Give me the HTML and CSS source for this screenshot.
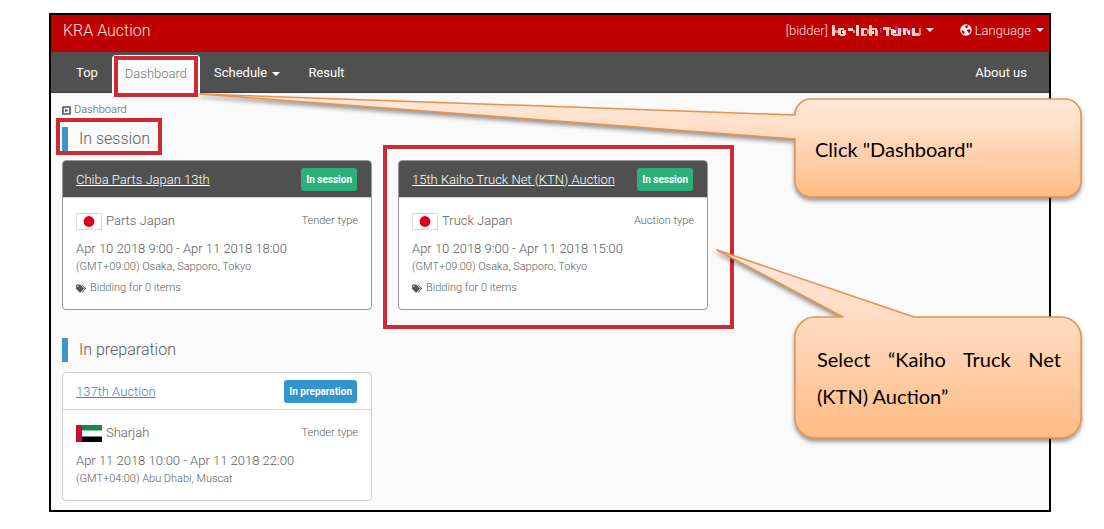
FILE: index.html
```html
<!DOCTYPE html>
<html lang="en">
<head>
<meta charset="utf-8">
<title>KRA Auction - Dashboard</title>
<link rel="stylesheet" href="styles.css">
</head>
<body>
<svg class="defs" aria-hidden="true">
  <symbol id="tags" viewBox="0 0 640 512"><path d="M497.941 225.941L286.059 14.059A48 48 0 0 0 252.118 0H48C21.49 0 0 21.49 0 48v204.118a48 48 0 0 0 14.059 33.941l211.882 211.882c18.744 18.745 49.136 18.746 67.882 0l204.118-204.118c18.745-18.745 18.745-49.137 0-67.882zM112 160c-26.51 0-48-21.49-48-48s21.49-48 48-48 48 21.49 48 48-21.49 48-48 48zm513.941 133.823L421.823 497.941c-18.745 18.745-49.137 18.745-67.882 0l-.36-.36L527.64 323.522c16.999-16.999 26.36-39.6 26.36-63.64s-9.362-46.641-26.36-63.64L331.397 0h48.721a48 48 0 0 1 33.941 14.059l211.882 211.882c18.745 18.745 18.745 49.137 0 67.882z"/></symbol>
  <symbol id="japan" viewBox="0 0 26 17"><path fill="#fff" stroke="#d5dadd" d="M.5.5h25v16H.5z"/><circle cx="13" cy="8.5" r="5.4" fill="#e0001b"/></symbol>
  <symbol id="uae" viewBox="0 0 26 17"><path fill="#fff" d="M0 0h26v17H0z"/><path fill="#158a4b" d="M5 0h21v5.5H5z"/><path fill="#000" d="M5 11.500h21V17H5z"/><path fill="#d3082f" d="M0 0h6v17H0z"/></symbol>
</svg>
<div class="frame">
  <header class="topbar">
    <a class="brand" href="#">KRA Auction</a>
    <button class="menu" type="button" aria-label="Bidder account">[bidder]
      <svg class="mosaic" viewBox="0 0 90 13" aria-hidden="true">
        <g fill="#f6cfc4"><path d="M1 1h3v11H1zM7 4h6v2H7zM7 5h3v6H7zM12 6h3v5h-3zM9 10h5v2H9zM17 4h5v3h-5zM25 3h3v9h-3zM30 4h6v2h-6zM30 6h3v5h-3zM30 10h6v2h-6zM38 1h3v11h-3zM41 4h5v2h-5zM44 6h3v6h-3zM55 3h3v9h-3zM52 3h4v3h-4zM60 5h3v6h-3zM62 10h5v2h-5zM67 4h3v8h-3zM72 4h3v7h-3zM76 6h4v3h-4zM81 4h3v8h-3zM84 9h5v3h-5z"/></g>
        <g fill="#f08a4a"><path d="M4 6h3v3H4zM22 6h2v3h-2zM36 5h2v5h-2zM58 3h2v3h-2zM75 4h2v3h-2zM88 4h2v7h-2z"/></g>
        <g fill="#c51d8d"><path d="M49 4h2v5h-2zM64 2h3v8h-3zM70 4h2v4h-2zM79 5h2v5h-2z"/></g>
        <g fill="#fff"><path d="M11 7h2v2h-2zM25 1h3v2h-3zM41 7h2v3h-2zM63 6h2v3h-2zM77 7h2v4h-2z"/></g>
      </svg>
      <span class="caret"></span></button>
    <button class="menu" type="button">
      <svg class="globe" viewBox="0 0 12 12" aria-hidden="true"><circle cx="6" cy="6" r="5.700" fill="#fff"/><path fill="#be0000" d="M5.500 1.600l2.200-.3 1 .9-1.400.9.300 1-1.500.2-1-1.200zM1.400 6l1.500.5 1.800 1.300-.4 1.300-.5 1.300-1.400-1.400zM7 5.700l2.400-.4 1.300 1.300-.6 1.600-1.300 1.300-.8-1.700-1.200-.7z"/></svg>Language
      <span class="caret"></span></button>
  </header>
  <nav class="nav">
    <a href="#">Top</a>
    <a class="active" href="#" aria-current="page">Dashboard<span class="mark mark-tab"></span></a>
    <button type="button">Schedule <span class="caret"></span></button>
    <a href="#">Result</a>
    <a class="last" href="#">About us</a>
  </nav>
  <main class="content">
    <div class="crumb">
      <svg viewBox="0 0 9 9" aria-hidden="true"><path fill="none" stroke="#4d5559" stroke-width="1.600" d="M1 1h7v7H1z"/><path fill="#4d5559" d="M3.200 2.500v4l3-2z"/></svg>Dashboard
    </div>
    <section>
      <h2>In session<span class="mark mark-title"></span></h2>
      <div class="cards">
        <article class="card live">
          <div class="card-head"><a href="#">Chiba Parts Japan 13th</a><span class="badge">In session</span></div>
          <div class="card-body">
            <div class="place"><svg class="flag" aria-hidden="true"><use href="#japan"/></svg><span>Parts Japan</span><small>Tender type</small></div>
            <p class="time">Apr 10 2018 9:00 - Apr 11 2018 18:00</p>
            <p class="zone">(GMT+09:00) Osaka, Sapporo, Tokyo</p>
            <p class="bids"><svg class="tags" aria-hidden="true"><use href="#tags"/></svg>Bidding for 0 items</p>
          </div>
        </article>
        <article class="card live">
          <div class="card-head"><a href="#">15th Kaiho Truck Net (KTN) Auction</a><span class="badge">In session</span></div>
          <div class="card-body">
            <div class="place"><svg class="flag" aria-hidden="true"><use href="#japan"/></svg><span>Truck Japan</span><small>Auction type</small></div>
            <p class="time">Apr 10 2018 9:00 - Apr 11 2018 15:00</p>
            <p class="zone">(GMT+09:00) Osaka, Sapporo, Tokyo</p>
            <p class="bids"><svg class="tags" aria-hidden="true"><use href="#tags"/></svg>Bidding for 0 items</p>
          </div>
          <span class="mark mark-card"></span>
        </article>
      </div>
    </section>
    <section>
      <h2>In preparation</h2>
      <div class="cards">
        <article class="card">
          <div class="card-head"><a href="#">137th Auction</a><span class="badge">In preparation</span></div>
          <div class="card-body">
            <div class="place"><svg class="flag" aria-hidden="true"><use href="#uae"/></svg><span>Sharjah</span><small>Tender type</small></div>
            <p class="time">Apr 11 2018 10:00 - Apr 11 2018 22:00</p>
            <p class="zone">(GMT+04:00) Abu Dhabi, Muscat</p>
          </div>
        </article>
      </div>
    </section>
  </main>
  <aside class="callout callout-one">
    <svg class="bubble" viewBox="0 0 884 106" aria-hidden="true">
      <defs><linearGradient id="g1" x1="0" y1="0" x2="0" y2="1"><stop offset="0" stop-color="#ffe9da"/><stop offset=".3" stop-color="#ffdfc9"/><stop offset="1" stop-color="#ffbc84"/></linearGradient></defs>
      <path fill="url(#g1)" stroke="#e8924e" stroke-width="1.500" stroke-linejoin="round" d="M596 22A16 16 0 0 1 612 6H866A16 16 0 0 1 882 22V88A16 16 0 0 1 866 104H612A16 16 0 0 1 596 88V46L1 1 596 22z"/>
    </svg>
    <p>Click "Dashboard"</p>
  </aside>
  <aside class="callout callout-two">
    <svg class="bubble" viewBox="0 0 367 191" aria-hidden="true">
      <defs><linearGradient id="g2" x1="0" y1="0" x2="0" y2="1"><stop offset="0" stop-color="#ffe9da"/><stop offset=".35" stop-color="#ffdcc3"/><stop offset="1" stop-color="#ffbc84"/></linearGradient></defs>
      <path fill="url(#g2)" stroke="#e8924e" stroke-width="1.500" stroke-linejoin="round" d="M99 68H127L1 1 198 68H345A20 20 0 0 1 365 88V169A20 20 0 0 1 345 189H99A20 20 0 0 1 79 169V88A20 20 0 0 1 99 68z"/>
    </svg>
    <p>Select “Kaiho Truck Net (KTN) Auction”</p>
  </aside>
</div>
</body>
</html>
```
FILE: styles.css
```css
* { box-sizing: border-box; }
body { margin: 0; background: #fff; color: #5c5c5c; font-family: Roboto, "Liberation Sans", sans-serif; font-size: 13px; font-weight: 300; }
a { color: inherit; }
button { border: 0; background: none; color: inherit; font: inherit; cursor: pointer; }
h2, p { margin: 0; }
.defs { position: absolute; width: 0; height: 0; }

.frame { position: relative; margin: 13px 53px 17px 49px; border: 2px solid #000; background: #fafafa; }

.topbar { display: flex; align-items: center; gap: 26px; padding: 0 5px 6px 12px; height: 37px; background: #be0000; border-bottom: 1px solid #8a1414; color: #fbe4e4; font-size: 13px; }
.brand { margin-right: auto; font-size: 16px; text-decoration: none; }
.menu { display: flex; align-items: center; gap: 3px; padding: 0; }
.mosaic { width: 90px; height: 13px; }
.globe { width: 12px; height: 12px; }
.caret { display: inline-block; vertical-align: middle; margin-left: 2px; border: 4px solid transparent; border-top-color: currentColor; border-bottom: 0; }

.nav { display: flex; align-items: flex-end; height: 41px; padding: 0 8px 0 11px; background: #505050; border-bottom: 1px solid #3c3c3c; color: #fff; font-size: 13px; font-weight: 400; }
.nav > * { display: block; padding: 0 14px; line-height: 38px; text-decoration: none; }
.nav .active { position: relative; margin-bottom: -1px; padding: 0 13px; background: #fafafa; border-radius: 4px 4px 0 0; color: #777; font-weight: 300; }
.nav .last { margin-left: auto; }

.content { padding: 9px 5px 9px 11px; }
.crumb { display: flex; align-items: center; gap: 3px; line-height: 16px; font-size: 11px; }
.crumb svg { width: 9px; height: 9px; }
h2 { position: relative; width: fit-content; margin: 9px 0; padding-left: 11px; border-left: 6px solid #3e94c9; font-size: 16px; font-weight: 300; line-height: 24px; }
section + section h2 { margin-top: 28px; margin-bottom: 10px; }

.cards { display: grid; grid-template-columns: repeat(3, minmax(0, 1fr)); gap: 26px; }
.card { position: relative; border: 1px solid #ccc; border-radius: 4px; background: #fff; }
.card-head { display: flex; align-items: center; justify-content: space-between; height: 37px; padding: 0 14px 0 13px; border-bottom: 1px solid #d5d5d5; color: #3e87b0; font-size: 13px; }
.badge { padding: 0 5px; border-radius: 3px; background: #3494cc; color: #fff; font-size: 10px; font-weight: 700; line-height: 23px; }
.live { border-color: #999; }
.live .card-head { border-radius: 3px 3px 0 0; background: #505050; color: #fff; }
.live .badge { background: #2bb07b; }
.card-body { padding: 14px 13px 12px; line-height: 16px; }
.place { display: flex; align-items: center; gap: 4px; margin-bottom: 10px; font-size: 13px; line-height: 18px; }
.place small { margin-left: auto; font-size: 11px; }
.flag { width: 26px; height: 17px; }
.time { font-size: 13px; line-height: 18px; }
.zone { font-size: 11px; line-height: 18px; }
.bids { display: flex; align-items: center; gap: 4px; margin-top: 3px; font-size: 11px; line-height: 18px; }
.tags { width: 10px; height: 9px; fill: #4d5559; }

.mark { position: absolute; border: 4px solid #cc2a34; pointer-events: none; }
.mark-tab { inset: 1px 2px -4px; }
.mark-title { inset: -9px -12px -4px -12px; }
.mark-card { inset: -16px -27px -20px -16px; }

.callout { position: absolute; color: #000; font-family: Lato, "Liberation Sans", sans-serif; font-size: 20px; font-weight: 400; line-height: 37px; }
.bubble { position: absolute; inset: 0; width: 100%; height: 100%; overflow: visible; filter: drop-shadow(0 3px 2px rgba(0, 0, 0, .4)); }
.callout p { position: relative; text-align: justify; }
.callout-one { top: 78px; right: -34px; width: 884px; height: 106px; padding: 38px 24px 0 616px; }
.callout-two { top: 234px; right: -34px; width: 367px; height: 191px; padding: 92px 22px 0 101px; }
```
